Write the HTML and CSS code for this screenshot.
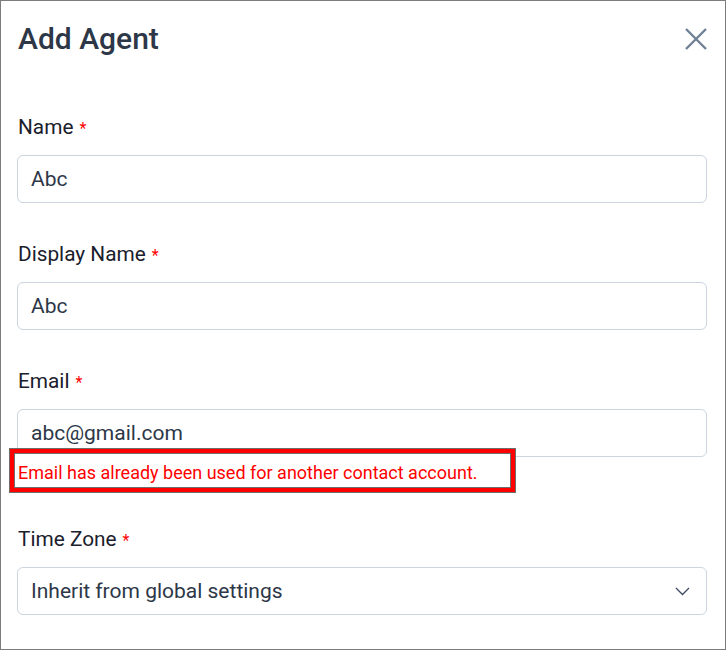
FILE: index.html
```html
<!DOCTYPE html>
<html>
<head>
<meta charset="utf-8">
<link rel="stylesheet" href="styles.css">
</head>
<body>
<div class="dialog">
  <div class="header">
    <h1 class="title">Add Agent</h1>
    <button class="close" aria-label="Close">
      <svg width="24" height="22" viewBox="0 0 24 22"><path d="M2 1 L22 21 M22 1 L2 21" stroke="#718096" stroke-width="2.4" fill="none"/></svg>
    </button>
  </div>
  <div class="form">
    <div class="field">
      <label class="label">Name<span class="req">*</span></label>
      <div class="input">Abc</div>
    </div>
    <div class="field">
      <label class="label">Display Name<span class="req">*</span></label>
      <div class="input">Abc</div>
    </div>
    <div class="field">
      <label class="label">Email<span class="req">*</span></label>
      <div class="input">abc@gmail.com</div>
      <div class="error">
        <div class="highlight"></div>
        <span class="error-text">Email has already been used for another contact account.</span>
      </div>
    </div>
    <div class="field">
      <label class="label">Time Zone<span class="req">*</span></label>
      <div class="input select">
        <span>Inherit from global settings</span>
        <svg width="15" height="9" viewBox="0 0 15 9"><path d="M1 1 L7.5 7.5 L14 1" stroke="#3b4a63" stroke-width="1.3" fill="none"/></svg>
      </div>
    </div>
  </div>
</div>
</body>
</html>
```
FILE: styles.css
```css
* { box-sizing: border-box; }
html, body { margin: 0; padding: 0; background: #fff; }
body { font-family: Roboto, "Liberation Sans", sans-serif; }
.dialog {
  width: 726px;
  height: 650px;
  border: 1px solid #7c7c7c;
  overflow: hidden;
}
.header {
  display: flex;
  justify-content: space-between;
  align-items: center;
  padding: 20px 17px 0 17px;
}
.title {
  margin: 0;
  font-size: 30px;
  line-height: 36px;
  font-weight: 500;
  color: #2d3748;
}
.close {
  border: 0;
  background: none;
  padding: 0;
  margin-top: -1px;
  width: 24px;
  height: 22px;
  display: flex;
}
.form {
  padding: 57px 18px 0 16px;
  display: flex;
  flex-direction: column;
  gap: 38px;
}
.field { display: flex; flex-direction: column; }
.label {
  font-size: 20.8px;
  line-height: 24px;
  height: 25px;
  padding-top: 1px;
  color: #1a202c;
  margin-bottom: 16px;
  padding-left: 1px;
}
.req {
  color: #f00;
  font-size: 16px;
  line-height: 0;
  margin-left: 6px;
}
.input {
  height: 48px;
  border: 1px solid #cbd5e0;
  border-radius: 6px;
  padding: 0 13px;
  display: flex;
  align-items: center;
  font-size: 21px;
  color: #2d3748;
}
.select { justify-content: space-between; padding-right: 16px; }
.error {
  position: relative;
  margin-top: 4px;
  margin-bottom: 3px;
  height: 24px;
  line-height: 24px;
}
.highlight {
  position: absolute;
  left: -7px;
  top: -12px;
  width: 505px;
  height: 43px;
  background: #fff;
  border: 4px solid #f00;
  outline: 1px solid #6e6e6e;
  box-shadow: inset 0 0 0 1px #6e6e6e;
}
.error-text {
  position: relative;
  font-size: 18px;
  color: #f00;
  padding-left: 1px;
}
```
